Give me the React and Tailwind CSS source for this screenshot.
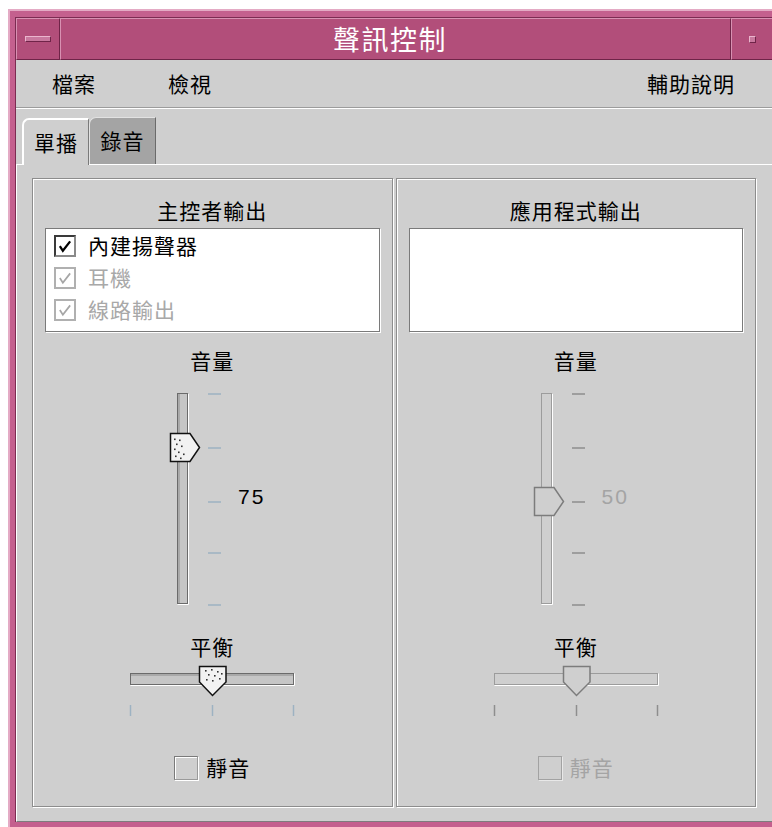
import React from 'react';

const PINK = '#b24e7a';

function Check({ disabled }) {
  return (
    <svg width="21" height="21" viewBox="0 0 21 21">
      <path
        d="M4.5 10 L8 15.5 L16.5 4.5"
        fill="none"
        stroke={disabled ? '#a6a6a6' : '#000'}
        strokeWidth={disabled ? 2 : 2.6}
        strokeLinejoin="miter"
      />
    </svg>
  );
}

function ListItem({ label, disabled }) {
  return (
    <div className="flex h-[32px] items-center gap-[12px]">
      <div
        className={
          disabled
            ? 'flex h-[22px] w-[22px] items-center justify-center border-2 border-[#b0b0b0] bg-white'
            : 'flex h-[22px] w-[22px] items-center justify-center border-2 border-t-[#3a3a3a] border-l-[#3a3a3a] border-r-[#8a8a8a] border-b-[#8a8a8a] bg-white'
        }
      >
        <Check disabled={disabled} />
      </div>
      <span className={disabled ? 'text-[#a8a8a8]' : 'text-black'}>{label}</span>
    </div>
  );
}

function VSlider({ value, disabled }) {
  const cy = 3.5 + (100 - value) * 2.16;
  const line = disabled ? '#9c9c9c' : '#6b6b6b';
  const tick = disabled ? '#8e8e8e' : '#9db2c2';
  const ticks = [4, 58, 112, 163, 215];
  return (
    <svg width="60" height="220" viewBox="0 0 60 220">
      <rect x="12.5" y="3.5" width="10" height="210" fill={disabled ? '#cfcfcf' : '#c6c6c6'} stroke={line} />
      {!disabled && <line x1="14" y1="4" x2="14" y2="213" stroke="#8c8c8c" />}
      <line x1="23.5" y1="4" x2="23.5" y2="214.5" stroke="#fff" />
      <line x1="12.5" y1="214.5" x2="23.5" y2="214.5" stroke="#fff" />
      {ticks.map((y) => (
        <line key={y} x1="43" y1={y} x2="56" y2={y} stroke={tick} strokeWidth="1.5" />
      ))}
      <path
        d={`M5.5 ${cy - 14} H25 L34.5 ${cy} L25 ${cy + 14} H5.5 Z`}
        fill={disabled ? '#cfcfcf' : '#f2f2f2'}
        stroke={disabled ? '#7c7c7c' : '#111'}
        strokeWidth="1.5"
      />
      {!disabled &&
        [
          [9, -9], [14, -8], [11, -4], [16, -2], [9, 1], [13, 4], [18, 6], [10, 8], [15, 10],
        ].map(([x, dy], i) => <rect key={i} x={x} y={cy + dy} width="1.6" height="1.6" fill="#333" />)}
    </svg>
  );
}

function HSlider({ disabled }) {
  const line = disabled ? '#9c9c9c' : '#6b6b6b';
  const tick = disabled ? '#8e8e8e' : '#9db2c2';
  return (
    <svg width="170" height="60" viewBox="0 0 170 60" className="mx-auto block">
      <rect x="3.5" y="13.5" width="163" height="11" fill={disabled ? '#cfcfcf' : '#c6c6c6'} stroke={line} />
      {!disabled && <line x1="4" y1="15" x2="166" y2="15" stroke="#8c8c8c" />}
      <line x1="3.5" y1="25.5" x2="167.5" y2="25.5" stroke="#fff" />
      <line x1="167.5" y1="13.5" x2="167.5" y2="25.5" stroke="#fff" />
      {[3.5, 85.5, 166.5].map((x) => (
        <line key={x} x1={x} y1="45" x2={x} y2="56" stroke={tick} strokeWidth="1.5" />
      ))}
      <path
        d="M72.5 6.5 H99 V22 L85.5 35.5 L72.5 22 Z"
        fill={disabled ? '#cfcfcf' : '#f2f2f2'}
        stroke={disabled ? '#7c7c7c' : '#111'}
        strokeWidth="1.5"
      />
      {!disabled &&
        [
          [78, 10], [84, 9], [90, 11], [81, 14], [87, 15], [94, 13], [79, 19], [85, 20], [92, 18],
        ].map(([x, y], i) => <rect key={i} x={x} y={y} width="1.6" height="1.6" fill="#333" />)}
    </svg>
  );
}

function Group({ title, items, volume, disabled }) {
  return (
    <div className="flex flex-1 flex-col border border-[#8d8d8d] shadow-[inset_1px_1px_0_#fff,1px_1px_0_#fff]">
      <div className="mt-[20px] h-[22px] text-center leading-[22px]">{title}</div>
      <div className="mx-[12px] mt-[7px] h-[104px] border border-[#7a7a7a] bg-white pl-[8px] pt-[1px] shadow-[1px_1px_0_#fff]">
        {items.map((it) => (
          <ListItem key={it.label} label={it.label} disabled={it.disabled} />
        ))}
      </div>
      <div className="mt-[17px] h-[22px] text-center leading-[22px]">音量</div>
      <div className="mt-[19px] flex items-start pl-[132px]">
        <VSlider value={volume} disabled={disabled} />
        <span
          className={
            'ml-[13px] mt-[95px] font-["Liberation_Sans",sans-serif] text-[21px] leading-[24px] tracking-[2px] ' +
            (disabled ? 'text-[#a4a4a4]' : 'text-black')
          }
        >
          {volume}
        </span>
      </div>
      <div className="mt-[25px] h-[22px] text-center leading-[22px]">平衡</div>
      <div className="mt-[3px]">
        <HSlider disabled={disabled} />
      </div>
      <div className="mt-[35px] flex h-[25px] items-center justify-center gap-[8px]">
        <div
          className={
            disabled
              ? 'h-[24px] w-[24px] border border-[#a2a2a2] shadow-[1px_1px_0_#e8e8e8]'
              : 'h-[24px] w-[24px] border border-t-[#7a7a7a] border-l-[#7a7a7a] border-r-[#9a9a9a] border-b-[#9a9a9a] shadow-[1px_1px_0_#fff,inset_1px_1px_0_#fff]'
          }
        />
        <span className={disabled ? 'text-[#a4a4a4]' : 'text-black'}>靜音</span>
      </div>
    </div>
  );
}

export default function App() {
  return (
    <div className="h-[827px] w-[772px] overflow-hidden bg-white pl-[8px] pt-[9px] font-['Noto_Sans_CJK_TC','Noto_Sans_CJK_SC',sans-serif] text-[21px] tracking-[1px] text-black">
      <div className="h-[818px] w-[764px] border-l-2 border-t-2 border-[#e4abc5] bg-[#c4608e] pl-[5px] pt-[6px]">
        <div className="flex h-[805px] flex-col border-l border-t border-[#7c2c52] bg-[#cfcfcf]">
          {/* title bar */}
          <div className="flex h-[42px]" style={{ background: PINK }}>
            <div className="flex w-[44px] items-center justify-center border border-t-[#d891b2] border-l-[#d891b2] border-r-[#6f2448] border-b-[#6f2448]">
              <div className="h-[6px] w-[26px] border border-t-[#ebb6ce] border-l-[#ebb6ce] border-r-[#6f2448] border-b-[#6f2448] bg-[#c9789e]" />
            </div>
            <div className="flex flex-1 items-center justify-center border border-t-[#d891b2] border-l-[#d891b2] border-r-[#6f2448] border-b-[#6f2448] pr-[11px] text-[27px] tracking-[1.5px] text-white">
              聲訊控制
            </div>
            <div className="flex w-[41px] items-center border border-r-0 border-t-[#d891b2] border-l-[#d891b2] border-b-[#6f2448] pl-[17px]">
              <div className="h-[7px] w-[7px] border border-t-[#ebb6ce] border-l-[#ebb6ce] border-r-[#6f2448] border-b-[#6f2448] bg-[#c9789e]" />
            </div>
          </div>

          {/* menu bar */}
          <div className="flex h-[48px] items-center border-b border-[#9c9c9c] pl-[36px] pr-[37px]">
            <span>檔案</span>
            <span className="ml-[72px]">檢視</span>
            <span className="ml-auto">輔助說明</span>
          </div>

          {/* tabs */}
          <div className="flex h-[56px] items-end border-t border-white pl-[6px]">
            <div className="relative z-10 -mb-px flex h-[47px] w-[67px] items-center justify-center rounded-tl-[7px] border-l-2 border-t-2 border-white border-r border-r-[#7a7a7a] bg-[#cfcfcf]">
              單播
            </div>
            <div className="flex h-[47px] w-[67px] items-center justify-center rounded-tl-[7px] border-l border-t border-[#e2e2e2] border-r border-r-[#6a6a6a] bg-[#a4a4a4]">
              錄音
            </div>
          </div>

          {/* panel */}
          <div className="flex flex-1 gap-[3px] border-b border-l border-t border-white border-b-[#7d7d7d] pb-[14px] pl-[15px] pr-[16px] pt-[13px]">
            <Group
              title="主控者輸出"
              volume={75}
              items={[
                { label: '內建揚聲器', disabled: false },
                { label: '耳機', disabled: true },
                { label: '線路輸出', disabled: true },
              ]}
            />
            <Group title="應用程式輸出" volume={50} items={[]} disabled />
          </div>
        </div>
      </div>
    </div>
  );
}
